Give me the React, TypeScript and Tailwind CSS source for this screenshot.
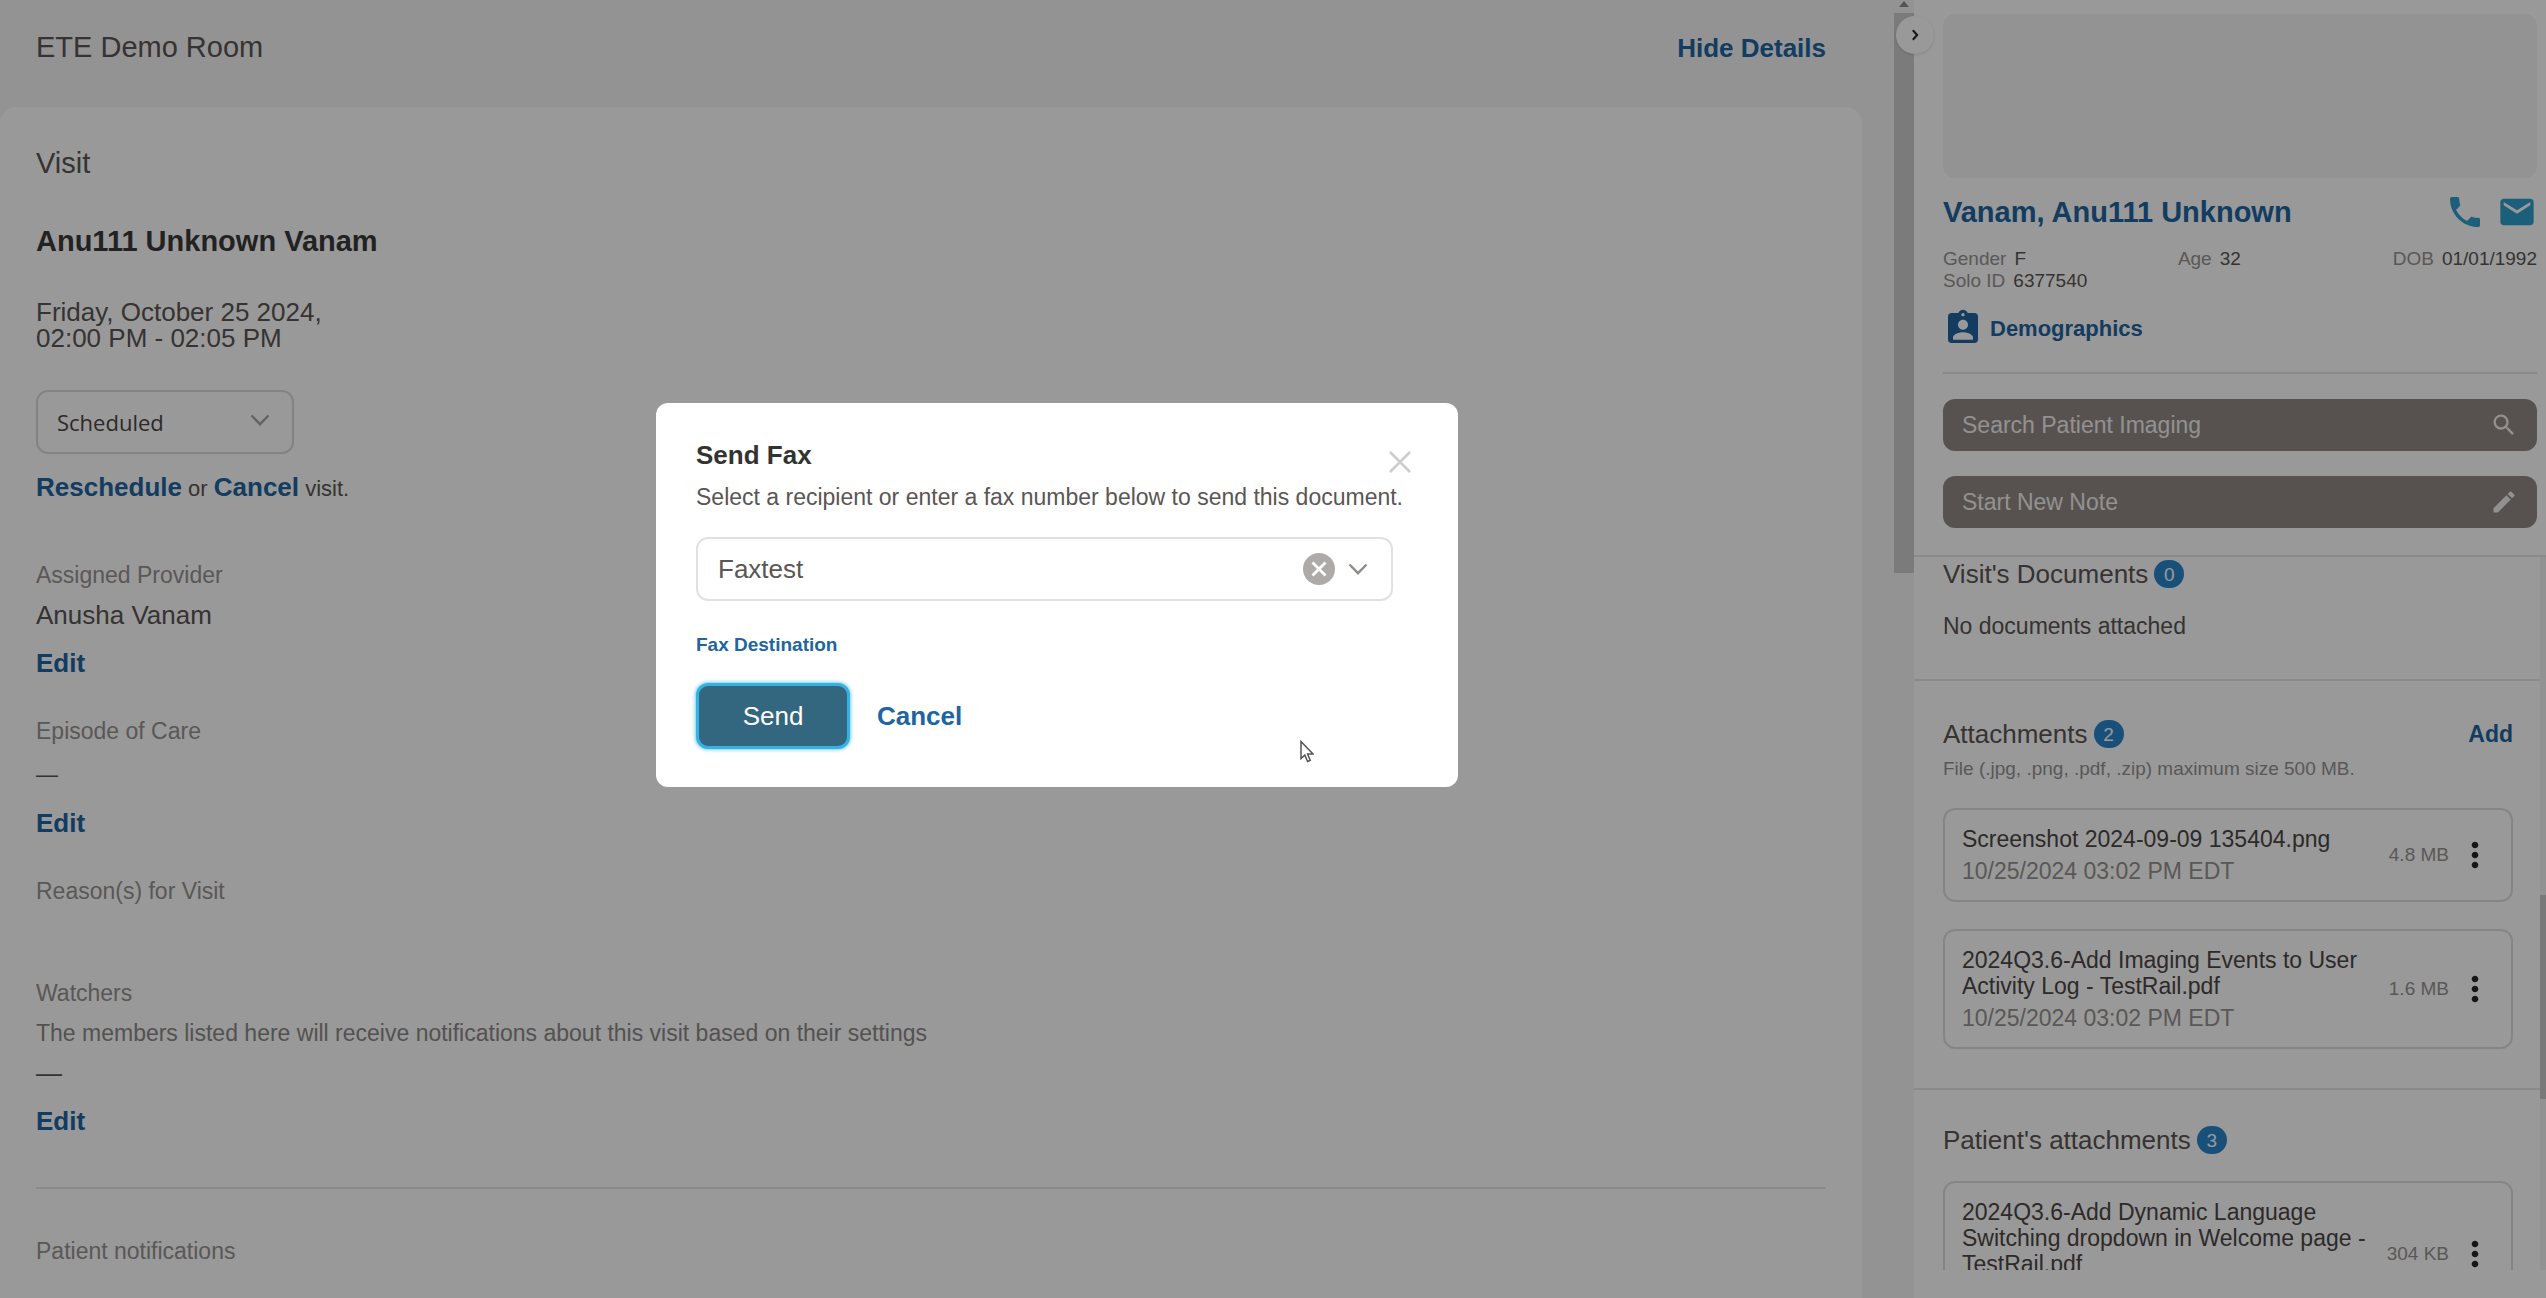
import { useState } from 'react';
import type { ReactNode } from 'react';
import { MdAssignmentInd, MdEdit, MdEmail, MdMoreVert, MdPhone, MdSearch } from 'react-icons/md';

type Attachment = { name: string; date: string; size: string };

const visitAttachments: Attachment[] = [
  { name: 'Screenshot 2024-09-09 135404.png', date: '10/25/2024 03:02 PM EDT', size: '4.8 MB' },
  {
    name: '2024Q3.6-Add Imaging Events to User Activity Log - TestRail.pdf',
    date: '10/25/2024 03:02 PM EDT',
    size: '1.6 MB',
  },
];

const patientAttachments: Attachment[] = [
  {
    name: '2024Q3.6-Add Dynamic Language Switching dropdown in Welcome page - TestRail.pdf',
    date: '10/25/2024 03:02 PM EDT',
    size: '304 KB',
  },
];

function Chevron({ className }: { className: string }) {
  return (
    <svg viewBox="0 0 20 12" fill="none" stroke="currentColor" strokeWidth="2.4" className={className} aria-hidden>
      <path d="M1.5 1.5 10 10.2 18.5 1.5" />
    </svg>
  );
}

function EditLink() {
  return (
    <a href="#edit" className="block text-[26px] leading-7 font-bold text-[#2065a0]">
      Edit
    </a>
  );
}

function FieldLabel({ children }: { children: ReactNode }) {
  return <h3 className="text-[23px] leading-7 text-[#969392]">{children}</h3>;
}

function CountBadge({ count }: { count: number }) {
  return (
    <span className="flex h-7 w-[30px] items-center justify-center rounded-full bg-[#2a85cc] text-[19px] leading-none text-white">
      {count}
    </span>
  );
}

function SectionTitle({ title, count }: { title: string; count: number }) {
  return (
    <div className="flex items-center gap-[6px]">
      <h2 className="text-[26px] leading-7">{title}</h2>
      <CountBadge count={count} />
    </div>
  );
}

function AttachmentCard({ file }: { file: Attachment }) {
  return (
    <li className="flex items-center rounded-xl border-2 border-[#e0dedd] py-4 pr-4 pl-[17px]">
      <div className="min-w-0 flex-1 pr-3">
        <p className="text-[23px] leading-[26px] text-[#4b4745]">{file.name}</p>
        <p className="mt-[6px] text-[23px] leading-[26px] text-[#969392]">{file.date}</p>
      </div>
      <span className="shrink-0 text-[19px] text-[#969392]">{file.size}</span>
      <button type="button" aria-label={`Actions for ${file.name}`} className="ml-[6px] text-[#262626]">
        <MdMoreVert size={40} />
      </button>
    </li>
  );
}

function VisitDetails() {
  return (
    <main className="flex min-w-0 flex-1 flex-col pr-8">
      <header className="flex h-[107px] items-baseline justify-between pt-[31px] pr-9 pl-9">
        <h1 className="text-[29px] leading-8">ETE Demo Room</h1>
        <button type="button" className="text-[26px] leading-8 font-bold text-[#2065a0]">
          Hide Details
        </button>
      </header>

      <section className="flex-1 rounded-t-2xl bg-white px-9 pt-10">
        <h2 className="text-[29px] leading-8">Visit</h2>
        <p className="mt-[46px] text-[29px] leading-8 font-bold text-[#3a3a3a]">Anu111 Unknown Vanam</p>
        <p className="mt-[42px] text-[26px] leading-[26px]">
          Friday, October 25 2024,
          <br />
          02:00 PM - 02:05 PM
        </p>

        <div className="relative mt-[39px] w-[258px]">
          <select
            aria-label="Visit status"
            defaultValue="Scheduled"
            className="h-16 w-full appearance-none rounded-xl border-2 border-[#dcdad9] bg-white pr-14 pl-[19px] font-['Open_Sans',sans-serif] text-[22px] font-medium text-[#4b4745]"
          >
            <option>Scheduled</option>
            <option>Checked In</option>
            <option>Completed</option>
          </select>
          <Chevron className="pointer-events-none absolute top-6 right-6 h-3 w-5 text-[#a8a5a4]" />
        </div>

        <p className="mt-[17px] text-[22px] leading-8">
          <a href="#reschedule" className="text-[26px] font-bold text-[#2065a0]">
            Reschedule
          </a>{' '}
          or{' '}
          <a href="#cancel" className="text-[26px] font-bold text-[#2065a0]">
            Cancel
          </a>{' '}
          visit.
        </p>

        <div className="mt-14">
          <FieldLabel>Assigned Provider</FieldLabel>
          <p className="mt-3 mb-5 text-[26px] leading-7">Anusha Vanam</p>
          <EditLink />
        </div>

        <div className="mt-10">
          <FieldLabel>Episode of Care</FieldLabel>
          <p className="mt-4 mb-5 text-[22px] leading-7">—</p>
          <EditLink />
        </div>

        <div className="mt-10">
          <FieldLabel>Reason(s) for Visit</FieldLabel>
        </div>

        <div className="mt-[74px]">
          <FieldLabel>Watchers</FieldLabel>
          <p className="mt-3 text-[23px] leading-7 text-[#8c8988]">
            The members listed here will receive notifications about this visit based on their settings
          </p>
          <p className="mt-3 mb-5 text-[26px] leading-7">—</p>
          <EditLink />
        </div>

        <div className="mt-[52px] border-t-2 border-[#e8e6e5] pt-12">
          <FieldLabel>Patient notifications</FieldLabel>
        </div>
      </section>
    </main>
  );
}

function Fact({ label, value }: { label: string; value: string }) {
  return (
    <span className="flex gap-2">
      <span className="text-[#969392]">{label}</span>
      <span>{value}</span>
    </span>
  );
}

function PatientPanel() {
  return (
    <aside className="relative flex w-[632px] shrink-0 flex-col bg-white pb-7">
      <button
        type="button"
        aria-label="Collapse patient panel"
        className="absolute top-4 -left-[18px] flex size-[38px] items-center justify-center rounded-full bg-white shadow"
      >
        <svg viewBox="0 0 8 14" fill="none" stroke="#262626" strokeWidth="2.4" className="h-3 w-2" aria-hidden>
          <path d="M1.5 1.5 6.5 7 1.5 12.5" />
        </svg>
      </button>

      <div className="pt-[14px] pr-[9px] pb-[27px] pl-[29px]">
        <div className="h-[164px] rounded-xl bg-[#f6f6f6]" />

        <div className="mt-[14px] flex items-center justify-between">
          <a href="#patient" className="text-[29px] leading-9 font-bold text-[#2065a0]">
            Vanam, Anu111 Unknown
          </a>
          <div className="flex gap-3 text-[#2f9fce]">
            <button type="button" aria-label="Call patient">
              <MdPhone size={40} />
            </button>
            <button type="button" aria-label="Email patient">
              <MdEmail size={40} />
            </button>
          </div>
        </div>

        <div className="mt-4 text-[19px] leading-[22px]">
          <div className="flex justify-between">
            <Fact label="Gender" value="F" />
            <Fact label="Age" value="32" />
            <Fact label="DOB" value="01/01/1992" />
          </div>
          <Fact label="Solo ID" value="6377540" />
        </div>

        <a href="#demographics" className="mt-4 flex items-center gap-[7px] text-[22px] font-bold text-[#2065a0]">
          <MdAssignmentInd size={40} />
          Demographics
        </a>

        <div className="mt-6 flex flex-col gap-[25px] border-t-2 border-[#e8e6e5] pt-[25px] text-[23px] text-[#f4f2f1]">
          <button type="button" className="flex h-[52px] items-center justify-between rounded-xl bg-[#918985] px-[19px]">
            Search Patient Imaging
            <MdSearch size={28} />
          </button>
          <button type="button" className="flex h-[52px] items-center justify-between rounded-xl bg-[#918985] px-[19px]">
            Start New Note
            <MdEdit size={28} />
          </button>
        </div>
      </div>

      <div className="flex min-h-0 flex-1 border-t-2 border-[#e8e6e5]">
        <div className="min-w-0 flex-1 overflow-hidden">
          <section className="pt-[3px] pr-[27px] pb-[39px] pl-[29px]">
            <SectionTitle title="Visit's Documents" count={0} />
            <p className="mt-6 text-[23px] leading-7">No documents attached</p>
          </section>

          <section className="border-t-2 border-[#e8e6e5] pt-[39px] pr-[27px] pb-[39px] pl-[29px]">
            <div className="flex items-center justify-between">
              <SectionTitle title="Attachments" count={2} />
              <button type="button" className="text-[23px] leading-7 font-bold text-[#2065a0]">
                Add
              </button>
            </div>
            <p className="mt-[9px] text-[19px] leading-6 text-[#969392]">
              File (.jpg, .png, .pdf, .zip) maximum size 500 MB.
            </p>
            <ul className="mt-[27px] flex flex-col gap-[27px]">
              {visitAttachments.map((f) => (
                <AttachmentCard key={f.name} file={f} />
              ))}
            </ul>
          </section>

          <section className="border-t-2 border-[#e8e6e5] pt-9 pr-[27px] pl-[29px]">
            <SectionTitle title="Patient's attachments" count={3} />
            <ul className="mt-[27px]">
              {patientAttachments.map((f) => (
                <AttachmentCard key={f.name} file={f} />
              ))}
            </ul>
          </section>
        </div>

        {/* Scroll position of the documents list */}
        <div className="w-[6px] bg-[#f4f4f4] pt-[338px]">
          <div className="h-[204px] bg-[#cacaca]" />
        </div>
      </div>
    </aside>
  );
}

function SendFaxDialog() {
  const [recipient, setRecipient] = useState('Faxtest');

  return (
    <div className="fixed inset-0 flex items-center justify-center bg-black/40 pr-[432px] pb-[108px]">
      <div
        role="dialog"
        aria-labelledby="send-fax-title"
        className="relative w-[802px] rounded-xl bg-white pt-9 pr-[65px] pb-[38px] pl-10"
      >
        <button type="button" aria-label="Close" className="absolute top-12 right-[47px] text-[#cfcdcc]">
          <svg viewBox="0 0 22 22" stroke="currentColor" strokeWidth="2.6" className="size-[22px]" aria-hidden>
            <path d="M1 1 21 21M21 1 1 21" />
          </svg>
        </button>

        <h2 id="send-fax-title" className="text-[26px] leading-8 font-bold text-[#333]">
          Send Fax
        </h2>
        <p className="mt-3 text-[23px] leading-7 whitespace-nowrap">
          Select a recipient or enter a fax number below to send this document.
        </p>

        <div className="mt-[26px] flex h-16 items-center rounded-xl border-2 border-[#e3e1e0] pr-[23px] pl-5">
          <input
            id="fax-recipient"
            type="text"
            value={recipient}
            onChange={(e) => setRecipient(e.target.value)}
            className="min-w-0 flex-1 text-[26px] outline-none"
          />
          <button
            type="button"
            aria-label="Clear recipient"
            onClick={() => setRecipient('')}
            className="flex size-8 items-center justify-center rounded-full bg-[#aeaaa8]"
          >
            <svg viewBox="0 0 16 16" stroke="#fff" strokeWidth="2.8" className="size-4" aria-hidden>
              <path d="M1.5 1.5 14.5 14.5M14.5 1.5 1.5 14.5" />
            </svg>
          </button>
          <button type="button" aria-label="Show recipients" className="ml-[13px] text-[#8f8c8a]">
            <Chevron className="h-3 w-5" />
          </button>
        </div>

        <label htmlFor="fax-recipient" className="mt-8 block text-[19px] leading-6 font-bold text-[#2065a0]">
          Fax Destination
        </label>

        <div className="mt-[26px] flex items-center gap-[27px] text-[26px]">
          <button
            type="button"
            className="h-[66px] w-[154px] rounded-xl border-3 border-[#35b2e2] bg-[#33667f] text-white shadow-[0_0_4px_#35b2e2]"
          >
            Send
          </button>
          <button type="button" className="font-bold text-[#2065a0]">
            Cancel
          </button>
        </div>

        {/* Mouse pointer */}
        <svg
          viewBox="0 0 14 22"
          fill="#fff"
          stroke="#555"
          strokeWidth="1.5"
          className="pointer-events-none absolute right-[144px] bottom-[24px] h-[23px] w-[14px]"
          aria-hidden
        >
          <path d="M1 1V18L4.8 14.6 7.6 21 10.2 19.8 7.6 13.6H13Z" />
        </svg>
      </div>
    </div>
  );
}

export default function App() {
  return (
    <div className="flex h-screen overflow-hidden bg-[#f6f6f6] font-['Liberation_Sans',Arial,sans-serif] text-[#5a5654]">
      <VisitDetails />

      {/* Scroll position of the visit column */}
      <div className="flex w-5 shrink-0 flex-col items-center">
        <svg viewBox="0 0 10 6" className="mt-px mb-[6px] h-[6px] w-[10px]" aria-hidden>
          <path d="M0 6 5 0 10 6Z" fill="#8c8c8c" />
        </svg>
        <div className="h-[560px] w-full bg-[#cdcdcd]" />
      </div>

      <PatientPanel />
      <SendFaxDialog />
    </div>
  );
}
